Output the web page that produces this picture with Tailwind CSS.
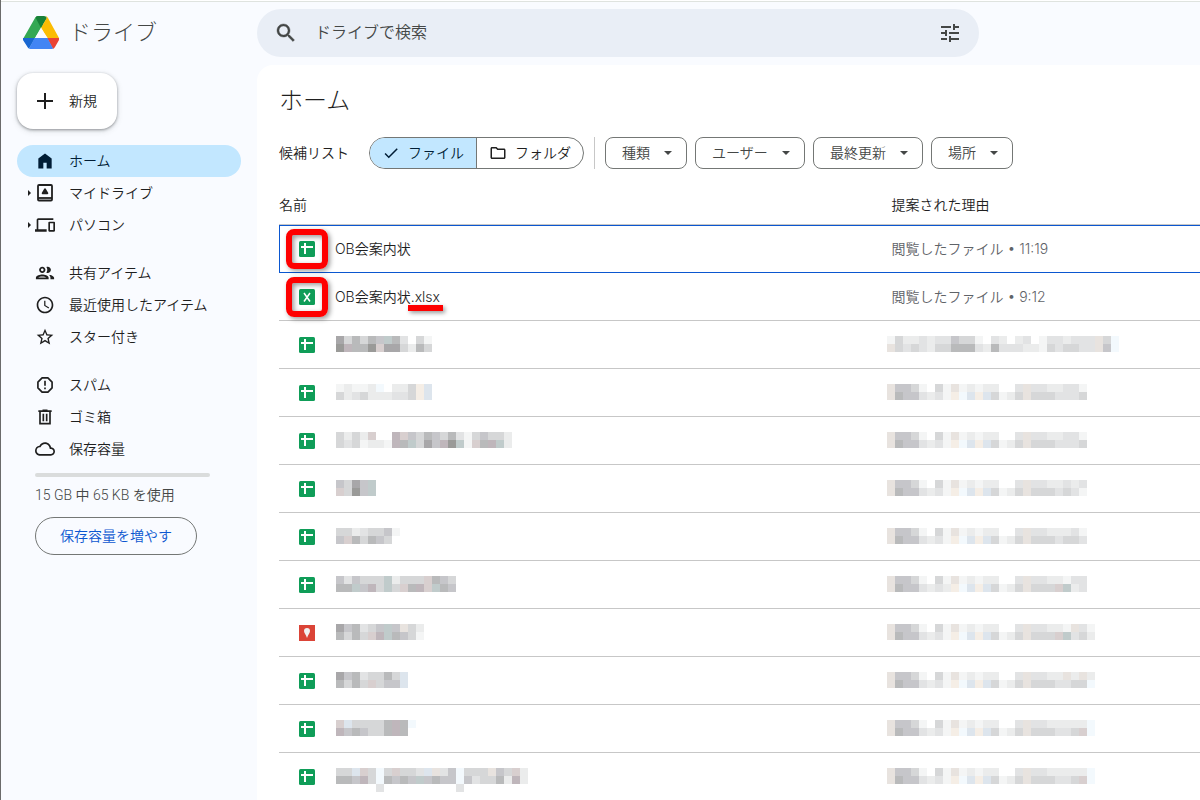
<!doctype html>
<html lang="ja">
<head>
  <meta charset="UTF-8">
  <meta name="viewport" content="width=device-width, initial-scale=1.0">
  <title>ホーム - ドライブ</title>
  <script src="https://cdn.jsdelivr.net/npm/@tailwindcss/browser@4"></script>
</head>
<body class="flex h-screen flex-col overflow-hidden border-l border-[#6b6b6b] bg-[#f9fbff] font-['Roboto','Noto_Sans_CJK_JP',sans-serif] text-sm font-[350] text-[#1f1f1f]">
  <div class="h-px shrink-0 bg-white"></div>

  <!-- Header -->
  <header class="flex h-16 shrink-0 items-center border-t border-[#dfe3df] pb-0.5">
    <a href="#" class="flex w-64 shrink-0 items-center gap-2 pl-5 text-[22px] font-light text-[#444746]">
      <svg class="h-10 w-10" viewBox="0 0 40 40" aria-hidden="true">
        <path fill="#34a853" d="M2 26 14 5q1-2 3-2l5 9L8 35z"/>
        <path fill="#188038" d="M14.500 4.500Q15 3 17 3h6q2 0 3 2l-6 10z"/>
        <path fill="#fbbc04" d="M20 15 26 4.500 24.500 3q1.500 0 2.500 2l11 20-1 2h-9z"/>
        <path fill="#1967d2" d="M2 25h12L8 35.500Q7 35 6.500 34L2 27z"/>
        <path fill="#ea4335" d="M26 25h12v2l-4 7q-.5 1-2 2z"/>
        <path fill="#4285f4" d="M13.500 25h13L32 35.500q-.5.500-2 .500H10q-1.500 0-2-.5z"/>
        <path fill="#f9fbff" d="m20 14.500 6 10.500H14z"/>
      </svg>
      <span>ドライブ</span>
    </a>
    <form class="flex h-12 w-full max-w-[722px] items-center rounded-full bg-[#e9eef6] px-[17px] text-[#444746]">
      <button type="submit" aria-label="検索">
        <svg class="h-6 w-6" viewBox="0 0 24 24" fill="currentColor" stroke="currentColor" stroke-width=".4"><path d="M15.500 14h-.79l-.28-.27C15.410 12.590 16 11.110 16 9.500 16 5.910 13.090 3 9.500 3S3 5.910 3 9.500 5.910 16 9.500 16c1.610 0 3.090-.59 4.230-1.570l.27.28v.79l5 4.990L20.490 19l-4.990-5zm-6 0C7.010 14 5 11.990 5 9.500S7.010 5 9.500 5 14 7.010 14 9.500 11.990 14 9.500 14z"/></svg>
      </button>
      <input type="text" aria-label="ドライブで検索" placeholder="ドライブで検索" class="ml-[17px] min-w-0 grow bg-transparent text-base outline-none placeholder:text-[#444746]">
      <button type="button" aria-label="検索オプション">
        <svg class="h-6 w-6" viewBox="0 0 24 24" fill="currentColor"><path d="M3 17v2h6v-2H3zM3 5v2h10V5H3zm10 16v-2h8v-2h-8v-2h-2v6h2zM7 9v2H3v2h4v2h2V9H7zm14 4v-2H11v2h10zm-6-4h2V7h4V5h-4V3h-2v6z"/></svg>
      </button>
    </form>
  </header>

  <div class="flex min-h-0 grow">
    <!-- Sidebar -->
    <aside class="w-64 shrink-0 px-4 pt-2">
      <button class="flex h-14 items-center gap-3 rounded-2xl bg-white pr-5 pl-4 shadow-[0_1px_3px_rgba(60,64,67,0.5),0_2px_6px_rgba(60,64,67,0.15)]">
        <svg class="h-6 w-6" viewBox="0 0 24 24" fill="none" stroke="currentColor" stroke-width="2"><path d="M12 4v16M4 12h16"/></svg>
        <span>新規</span>
      </button>

      <nav class="mt-4 flex flex-col gap-4">
        <ul>
          <li><a href="#" class="flex h-8 items-center rounded-full bg-[#c2e7ff] pl-[18px] text-[#001d35]">
            <svg class="h-5 w-5" viewBox="0 0 24 24" fill="currentColor"><path d="M4 21V9l8-6 8 6v12h-6v-7h-4v7z"/></svg>
            <span class="ml-[14px]">ホーム</span>
          </a></li>
          <li><a href="#" class="flex h-8 items-center pl-[10px]">
            <svg class="h-5 w-2" viewBox="0 0 8 20" fill="currentColor"><path d="M1 7v6l3-3z"/></svg>
            <svg class="h-5 w-5" viewBox="0 0 20 20" fill="none" stroke="currentColor" stroke-width="1.800"><rect x="3" y="2" width="14" height="15.500" rx="1"/><path d="M3 15h14"/><path d="M10 6.500 7.800 10.200h4.400z" stroke-width="2.200" stroke-linejoin="round"/></svg>
            <span class="ml-[14px]">マイドライブ</span>
          </a></li>
          <li><a href="#" class="flex h-8 items-center pl-[10px]">
            <svg class="h-5 w-2" viewBox="0 0 8 20" fill="currentColor"><path d="M1 7v6l3-3z"/></svg>
            <svg class="h-5 w-5" viewBox="0 0 24 24" fill="currentColor"><path d="M4 6h18V4H4c-1.100 0-2 .9-2 2v11H0v3h14v-3H4V6zm19 2h-6c-.55 0-1 .45-1 1v10c0 .55.450 1 1 1h6c.55 0 1-.45 1-1V9c0-.55-.45-1-1-1zm-1 10h-4v-8h4v8z"/></svg>
            <span class="ml-[14px]">パソコン</span>
          </a></li>
        </ul>
        <ul>
          <li><a href="#" class="flex h-8 items-center pl-[18px]">
            <svg class="h-5 w-5" viewBox="1 1 22 22" fill="currentColor"><path d="M9 13.750c-2.340 0-7 1.170-7 3.500V19h14v-1.750c0-2.330-4.660-3.500-7-3.500zM4.340 17c.84-.58 2.870-1.250 4.660-1.250s3.820.67 4.660 1.250H4.340zM9 12c1.930 0 3.500-1.570 3.500-3.500S10.930 5 9 5 5.500 6.570 5.500 8.500 7.070 12 9 12zm0-5c.83 0 1.500.67 1.500 1.500S9.830 10 9 10s-1.500-.67-1.500-1.500S8.170 7 9 7zm7.040 6.810c1.160.84 1.960 1.960 1.960 3.440V19h4v-1.750c0-2.020-3.500-3.170-5.960-3.440zM15 12c1.930 0 3.500-1.570 3.500-3.500S16.930 5 15 5c-.54 0-1.040.13-1.500.35.63.89 1 1.980 1 3.150s-.37 2.260-1 3.150c.46.22.96.35 1.500.35z"/></svg>
            <span class="ml-[14px]">共有アイテム</span>
          </a></li>
          <li><a href="#" class="flex h-8 items-center pl-[18px]">
            <svg class="h-5 w-5" viewBox="0 0 24 24" fill="currentColor"><path d="M11.990 2C6.470 2 2 6.480 2 12s4.470 10 9.990 10C17.520 22 22 17.520 22 12S17.520 2 11.990 2zM12 20c-4.420 0-8-3.580-8-8s3.580-8 8-8 8 3.580 8 8-3.580 8-8 8zm.5-13H11v6l5.250 3.150.75-1.230-4.500-2.670z"/></svg>
            <span class="ml-[14px]">最近使用したアイテム</span>
          </a></li>
          <li><a href="#" class="flex h-8 items-center pl-[18px]">
            <svg class="h-5 w-5" viewBox="0 0 24 24" fill="currentColor"><path d="m22 9.240-7.190-.62L12 2 9.190 8.630 2 9.240l5.460 4.730L5.820 21 12 17.270 18.180 21l-1.630-7.030L22 9.240zM12 15.400l-3.760 2.270 1-4.280-3.320-2.880 4.380-.38L12 6.100l1.710 4.040 4.380.38-3.320 2.880 1 4.280L12 15.400z"/></svg>
            <span class="ml-[14px]">スター付き</span>
          </a></li>
        </ul>
        <ul>
          <li><a href="#" class="flex h-8 items-center pl-[18px]">
            <svg class="h-5 w-5" viewBox="0 0 24 24" fill="none" stroke="currentColor" stroke-width="2"><path d="M8.500 3.500h7l5 5v7l-5 5h-7l-5-5v-7z" stroke-linejoin="round"/><path d="M12 7v6M12 15v2"/></svg>
            <span class="ml-[14px]">スパム</span>
          </a></li>
          <li><a href="#" class="flex h-8 items-center pl-[18px]">
            <svg class="h-5 w-5" viewBox="0 0 24 24" fill="none" stroke="currentColor" stroke-width="2"><path d="M4 5h16M9 4h6M6 5v15h12V5M10 8v9M14 8v9"/></svg>
            <span class="ml-[14px]">ゴミ箱</span>
          </a></li>
          <li><a href="#" class="flex h-8 items-center pl-[18px]">
            <svg class="h-5 w-5" viewBox="0 0 24 24" fill="currentColor"><path d="M19.350 10.040C18.670 6.590 15.640 4 12 4 9.110 4 6.600 5.640 5.350 8.040 2.340 8.360 0 10.910 0 14c0 3.310 2.690 6 6 6h13c2.760 0 5-2.240 5-5 0-2.640-2.050-4.780-4.650-4.960zM19 18H6c-2.210 0-4-1.790-4-4 0-2.050 1.530-3.760 3.560-3.970l1.070-.11.5-.95C8.080 7.140 9.940 6 12 6c2.620 0 4.880 1.860 5.390 4.430l.3 1.500 1.530.11c1.560.1 2.780 1.410 2.780 2.960 0 1.650-1.350 3-3 3z"/></svg>
            <span class="ml-[14px]">保存容量</span>
          </a></li>
        </ul>
      </nav>

      <!-- Storage -->
      <div class="mt-2 flex flex-col items-start pr-[31px] pl-[18px]">
        <div role="progressbar" aria-label="保存容量" aria-valuenow="0" class="h-1 w-full rounded-full bg-[#dadcdc]"></div>
        <p class="mt-2 leading-5 text-[#444746]">15 GB 中 65 KB を使用</p>
        <button class="mt-3 h-[38px] rounded-full border border-[#747775] px-6 whitespace-nowrap text-[#0b57d0]">保存容量を増やす</button>
      </div>
    </aside>

    <!-- File list -->
    <main class="min-w-0 grow overflow-hidden rounded-tl-2xl bg-white pt-5 pl-[22px]">
      <h1 class="text-2xl leading-8 font-light">ホーム</h1>

      <div class="mt-5 flex items-center">
        <span>候補リスト</span>
        <div class="ml-5 flex h-8 overflow-hidden rounded-full border border-[#747775]">
          <button aria-pressed="true" class="flex items-center gap-2 border-r border-[#747775] bg-[#c2e7ff] px-3 text-[#001d35]">
            <svg class="h-[18px] w-[18px]" viewBox="0 0 24 24" fill="currentColor"><path d="M9 16.170 4.830 12l-1.420 1.410L9 19 21 7l-1.410-1.410z"/></svg>
            <span>ファイル</span>
          </button>
          <button aria-pressed="false" class="flex items-center gap-2 px-3">
            <svg class="h-[18px] w-[18px]" viewBox="0 0 24 24" fill="currentColor"><path d="m9.170 6 2 2H20v10H4V6h5.170M10 4H4c-1.100 0-1.990.9-1.990 2L2 18c0 1.100.9 2 2 2h16c1.100 0 2-.9 2-2V8c0-1.100-.9-2-2-2h-8l-2-2z"/></svg>
            <span>フォルダ</span>
          </button>
        </div>
        <div class="mx-[10px] h-8 w-px bg-[#c7c7c7]"></div>
        <div class="flex gap-2 text-[#444746]">
          <div class="relative">
            <select aria-label="種類" class="h-8 appearance-none rounded-lg border border-[#747775] pr-9 pl-4"><option>種類</option></select>
            <svg class="pointer-events-none absolute top-1 right-[7px] h-6 w-6" viewBox="0 0 24 24" fill="currentColor"><path d="m8 10 4 4 4-4z"/></svg>
          </div>
          <div class="relative">
            <select aria-label="ユーザー" class="h-8 appearance-none rounded-lg border border-[#747775] pr-9 pl-4"><option>ユーザー</option></select>
            <svg class="pointer-events-none absolute top-1 right-[7px] h-6 w-6" viewBox="0 0 24 24" fill="currentColor"><path d="m8 10 4 4 4-4z"/></svg>
          </div>
          <div class="relative">
            <select aria-label="最終更新" class="h-8 appearance-none rounded-lg border border-[#747775] pr-9 pl-4"><option>最終更新</option></select>
            <svg class="pointer-events-none absolute top-1 right-[7px] h-6 w-6" viewBox="0 0 24 24" fill="currentColor"><path d="m8 10 4 4 4-4z"/></svg>
          </div>
          <div class="relative">
            <select aria-label="場所" class="h-8 appearance-none rounded-lg border border-[#747775] pr-9 pl-4"><option>場所</option></select>
            <svg class="pointer-events-none absolute top-1 right-[7px] h-6 w-6" viewBox="0 0 24 24" fill="currentColor"><path d="m8 10 4 4 4-4z"/></svg>
          </div>
        </div>
      </div>

      <table class="mt-4 w-full table-fixed border-separate border-spacing-0 font-['Inter','Noto_Sans_CJK_JP',sans-serif]">
        <thead>
          <tr class="h-10">
            <th class="w-[66.5%] border-b border-[#c7c7c7] text-left font-[350]">名前</th>
            <th class="border-b border-[#c7c7c7] text-left font-[350]">提案された理由</th>
          </tr>
        </thead>
        <tbody id="files">
          <tr class="h-12">
            <td class="border-y border-l border-[#0b57d0] pl-[19px]">
              <div class="flex items-center gap-5">
                <div class="relative">
                  <svg class="h-4 w-4" viewBox="0 0 16 16"><rect width="16" height="16" rx="1.500" fill="#0f9d58"/><path fill="#fff" d="M2 5h3V2h2v3h7v2H7v6H5V7H2z"/></svg>
                  <div class="absolute -inset-x-[13px] -inset-y-3 rounded-lg border-6 border-[#fe0000] shadow-[2px_2px_5px_rgba(0,0,0,0.4),inset_2px_2px_5px_rgba(0,0,0,0.4)]"></div>
                </div>
                <a href="#">OB会案内状</a>
              </div>
            </td>
            <td class="border-y border-[#0b57d0] text-[#5f6368]">閲覧したファイル • 11:19</td>
          </tr>
          <tr class="h-12">
            <td class="border-b border-[#c7c7c7] pl-5">
              <div class="flex items-center gap-5">
                <div class="relative">
                  <svg class="h-4 w-4" viewBox="0 0 16 16"><rect width="16" height="16" rx="1.500" fill="#0f9d58"/><path fill="none" stroke="#fff" stroke-width="1.500" d="m5 4 6 8.500M11 4l-6 8.500"/></svg>
                  <div class="absolute -inset-x-[13px] -inset-y-3 rounded-lg border-6 border-[#fe0000] shadow-[2px_2px_5px_rgba(0,0,0,0.4),inset_2px_2px_5px_rgba(0,0,0,0.4)]"></div>
                </div>
                <a href="#">OB会案内状<span class="relative">.xlsx<span class="absolute -inset-x-[3px] -bottom-[6px] h-[6px] bg-[#fe0000] shadow-[2px_2px_4px_rgba(0,0,0,0.4)]"></span></span></a>
              </div>
            </td>
            <td class="border-b border-[#c7c7c7] text-[#5f6368]">閲覧したファイル • 9:12</td>
          </tr>
        </tbody>
      </table>
    </main>
  </div>

  <script>
    // colour of each 8px tile, "." leaves the tile empty
    const tiles = {
      k: '#9a9a98', a: '#a8a7a9', b: '#b9babb', m: '#bfb6bb', c: '#c6c6ca', t: '#c0cbcb', p: '#d8cfcf',
      d: '#d6d7d8', e: '#e2e3e4', w: '#e8e3df', f: '#ebecec', g: '#f4f5f5', l: '#dde5ed', y: '#f5eee6', s: '#f3f9fd'
    };

    // hidden names and reasons, one string per line of tiles
    const files = [
      { type: 'sheet', name: ['axbdbctbe.dg', 'kmbbkpaadfbd'], reason: ['gdffefeecddg.ef.fe.geefeeewds', 'wdedefddbbbefbeeeffgdeddeewcs'] },
      { type: 'sheet', name: ['gfggfs.ffdyl', 'dfedfffeedyl'], reason: ['wccdg.dgwgfgff..eweeffeeg', 'wbccefegyslyldgfdwdddeeed'] },
      { type: 'sheet', name: ['dfdfp..mpcdbcdbegdcddf', 'dedgffgmbtdacmktgpbmtf'], reason: ['wccdg.dgwgfgff..eweeffeeg', 'wbccefegyslyldgfdwdddeeed'] },
      { type: 'sheet', name: ['cdact', 'pdkct'], reason: ['wccdg.dgwgfgff..eweeffefe', 'wbccefegyslyldgfdwdddedeg'] },
      { type: 'sheet', name: ['ddfeddcg', 'cpbdbcd'], reason: ['wccdg.dgwgfgff..eweefffeg', 'wbccefegyslyldgfdwdddedde'] },
      { type: 'sheet', name: ['cecdddtfdddpbcd', 'bbtcmdtdpbmptbc'], reason: ['wccdg.dgwgfgff..eweeffgee', 'wbccefefyslyldgfdwdddptfe'] },
      { type: 'map', name: ['acbedctcwdf', 'bdbdpmtbcdg'], reason: ['wccdg.dgwgfgff..eweeffgweg', 'wbccefegyslyldgfdwdddptedf'] },
      { type: 'sheet', name: ['acbeddbdl', 'bdbdpdccl'], reason: ['wccdg.dgwgfgff..eweeffwfwf', 'wbccefegyslyldgfdwdddeedds'] },
      { type: 'sheet', name: ['plddddbmbs', 'mcbcddbmb'], reason: ['wccdg.dgwgfgff..eweefffffs', 'wbccefegyslyldgfdwdddeedps'] },
      { type: 'sheet', name: ['ddlpdsdpddelwecsdddwcdpf', 'bbcmdsbcbctcbccsceddbfmf', '.....e.........e'], reason: ['wccdg.dgwgfgff..eweefffffs', 'wbccefegyslyldgfdwdddeedps'] }
    ];

    const icons = {
      sheet: '<rect width="16" height="16" rx="1.500" fill="#0f9d58"/><path fill="#fff" d="M2 5h3V2h2v3h7v2H7v6H5V7H2z"/>',
      map: '<rect width="16" height="16" fill="#db4437"/><path fill="#f1f1f1" d="M8 3a3 3 0 0 0-3 3c0 2 2 3.500 3 7 1-3.500 3-5 3-7a3 3 0 0 0-3-3z"/>'
    };

    function mosaic(lines) {
      let rects = '';
      lines.forEach((line, y) => {
        [...line].forEach((tile, x) => {
          if (tile !== '.') rects += `<rect x="${x * 8}" y="${y * 8}" width="8" height="8" fill="${tiles[tile] || tiles.d}"/>`;
        });
      });
      return `<svg class="block h-[18px] w-[240px] overflow-visible" viewBox="0 0 240 18" shape-rendering="crispEdges" aria-hidden="true">${rects}</svg>`;
    }

    const body = document.getElementById('files');
    files.forEach(file => {
      const row = document.createElement('tr');
      row.className = 'h-12';
      row.innerHTML = `
        <td class="border-b border-[#c7c7c7] pl-5">
          <div class="flex items-center gap-[21px]">
            <svg class="h-4 w-4" viewBox="0 0 16 16">${icons[file.type]}</svg>
            ${mosaic(file.name)}
          </div>
        </td>
        <td class="border-b border-[#c7c7c7]"><div class="-ml-1">${mosaic(file.reason)}</div></td>
      `;
      body.appendChild(row);
    });
  </script>
</body>
</html>
